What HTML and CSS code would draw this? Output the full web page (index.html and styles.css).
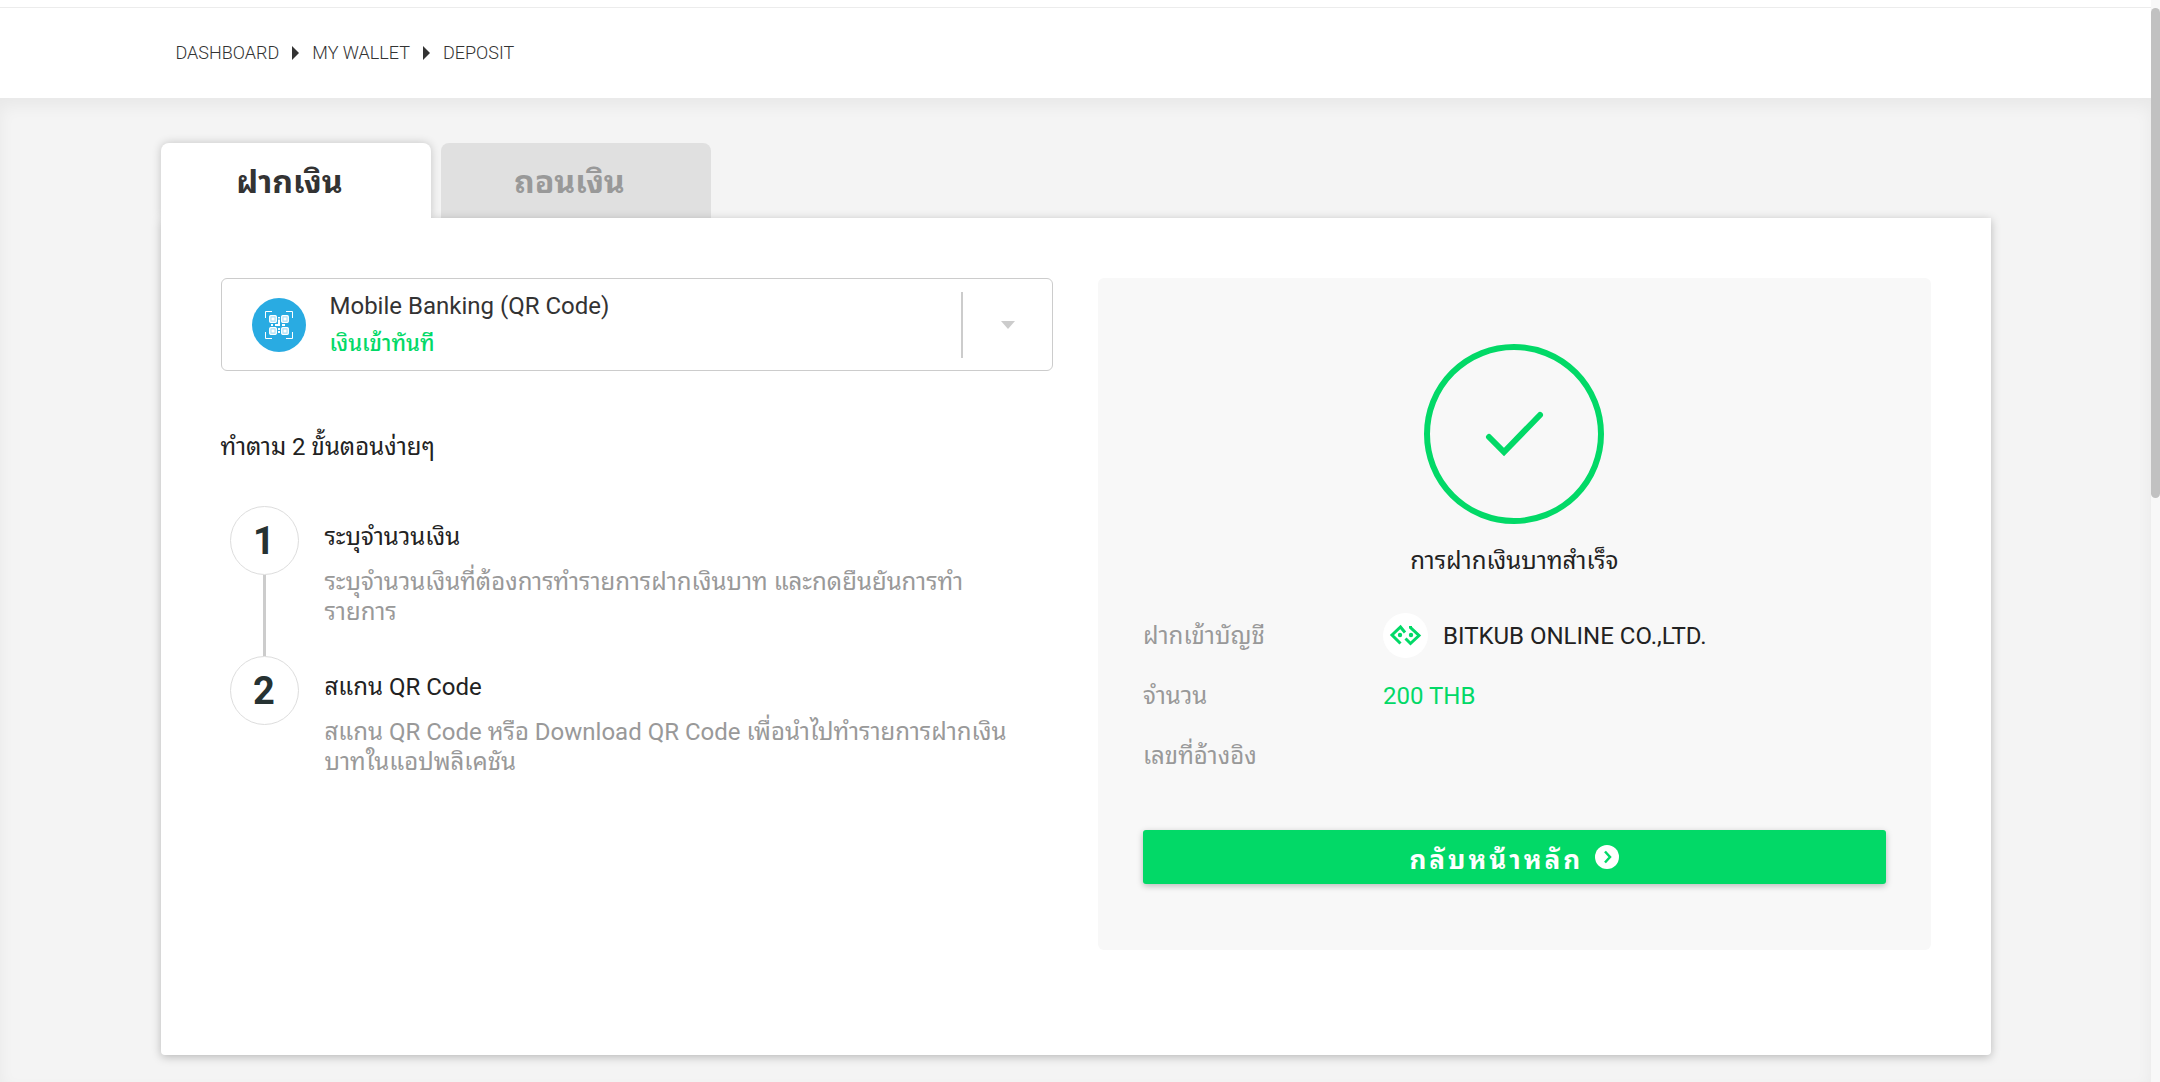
FILE: index.html
```html
<!DOCTYPE html>
<html lang="th">

<head>
    <meta charset="UTF-8">
    <meta name="viewport" content="width=device-width, initial-scale=1.0">
    <title>Deposit</title>
    <link rel="stylesheet" href="styles.css">
</head>

<body>

    <div class="scrollbar">
        <div class="scrollbar-thumb"></div>
    </div>

    <header class="topbar">
        <nav class="container breadcrumb">
            <a href="#">DASHBOARD</a>
            <span class="arrow"></span>
            <a href="#">MY WALLET</a>
            <span class="arrow"></span>
            <a href="#">DEPOSIT</a>
        </nav>
    </header>

    <main class="content">
        <div class="container">

            <div class="tabs">
                <button type="button" class="tab active">ฝากเงิน</button>
                <button type="button" class="tab">ถอนเงิน</button>
            </div>

            <div class="card">

                <!-- Method and steps -->
                <section class="column">
                    <div class="method">
                        <svg class="method-icon" viewBox="0 0 54 54">
                            <circle cx="27" cy="27" r="27" fill="#29abe2"/>
                            <g fill="none" stroke="#fff">
                                <path d="M13.5 20v-6.500h6.500M34 13.500h6.500v6.500M40.500 34v6.500h-6.500M20 40.500h-6.500v-6.500"/>
                                <g fill="#a9def4" stroke-width="1.300">
                                    <rect x="17.700" y="17.700" width="6.600" height="6.600" rx="1"/>
                                    <rect x="29.700" y="17.700" width="6.600" height="6.600" rx="1"/>
                                    <rect x="17.700" y="29.700" width="6.600" height="6.600" rx="1"/>
                                    <rect x="29.700" y="29.700" width="6.600" height="6.600" rx="1"/>
                                </g>
                            </g>
                            <path fill="#fff" d="M19.500 19.500h3v3h-3zM31.500 19.500h3v3h-3zM19.500 31.500h3v3h-3zM31.500 31.500h3v3h-3zM26 19h2v1.500h-2zM26 21.500h2v6.500h-5v-2h3zM19 26h2v2h-2zM30 26h3v2h-3zM26 30h2v2h-2zM26 33h2v2h-2z"/>
                        </svg>
                        <div class="method-text">
                            <select id="method" aria-label="Deposit method">
                                <option>Mobile Banking (QR Code)</option>
                            </select>
                            <label for="method">เงินเข้าทันที</label>
                        </div>
                        <span class="method-arrow"></span>
                    </div>

                    <h2>ทำตาม 2 ขั้นตอนง่ายๆ</h2>

                    <ol class="steps">
                        <li>
                            <span class="number">1</span>
                            <div class="step-text">
                                <h3>ระบุจำนวนเงิน</h3>
                                <p>ระบุจำนวนเงินที่ต้องการทำรายการฝากเงินบาท และกดยืนยันการทำรายการ</p>
                            </div>
                        </li>
                        <li>
                            <span class="number">2</span>
                            <div class="step-text">
                                <h3>สแกน QR Code</h3>
                                <p>สแกน QR Code หรือ Download QR Code เพื่อนำไปทำรายการฝากเงินบาทในแอปพลิเคชัน</p>
                            </div>
                        </li>
                    </ol>
                </section>

                <!-- Result -->
                <section class="column result">
                    <svg class="success" viewBox="0 0 180 180" fill="none" stroke="#02d967">
                        <circle cx="90" cy="90" r="87" stroke-width="6"/>
                        <path d="M65 93l15 15 36-37" stroke-width="6" stroke-linecap="round"/>
                    </svg>
                    <h2>การฝากเงินบาทสำเร็จ</h2>

                    <dl class="details">
                        <dt>ฝากเข้าบัญชี</dt>
                        <dd>
                            <svg class="logo" viewBox="0 0 45 45">
                                <circle cx="22.500" cy="22.500" r="22.500" fill="#fff"/>
                                <g fill="none" stroke="#02d967" stroke-width="3">
                                    <path d="M22 19.500l-4.500-5.500-8.500 8 8.500 8.500"/>
                                    <path d="M27.500 13l0 1.500 8.500 8-8.500 8-5-5"/>
                                </g>
                                <circle cx="17" cy="22" r="2.200" fill="#02d967"/>
                                <circle cx="28" cy="22" r="2.200" fill="#02d967"/>
                            </svg>
                            BITKUB ONLINE CO.,LTD.
                        </dd>
                        <dt>จำนวน</dt>
                        <dd class="amount">200 THB</dd>
                        <dt>เลขที่อ้างอิง</dt>
                        <dd></dd>
                    </dl>

                    <button type="button" class="back-btn">
                        กลับหน้าหลัก
                        <svg viewBox="0 0 24 24">
                            <circle cx="12" cy="12" r="12" fill="#fff"/>
                            <path d="M10 6.500l5 5.500-5 5.500" fill="none" stroke="#02d967" stroke-width="2.500"/>
                        </svg>
                    </button>
                </section>

            </div>
        </div>
    </main>

</body>

</html>
```
FILE: styles.css
```css
* {
    box-sizing: border-box;
}

body {
    margin: 0;
    padding-right: 9px;
    background-color: #fff;
    color: #222;
    font-family: Roboto, "Noto Sans Thai Looped", sans-serif;
    font-size: 24px;
    line-height: 30px;
}

h2,
h3,
p,
dl,
dd,
ol {
    margin: 0;
    padding: 0;
    font-size: 24px;
    font-weight: 400;
}

button,
select {
    border: none;
    font-family: inherit;
    cursor: pointer;
}

.container {
    max-width: 1830px;
    margin: 0 auto;
}

.scrollbar {
    position: fixed;
    top: 0;
    right: 0;
    bottom: 0;
    width: 9px;
    padding-top: 8px;
    background-color: #f8f8f8;
}

.scrollbar-thumb {
    height: 490px;
    border-radius: 5px;
    background-color: #c1c1c1;
}

.topbar {
    margin-top: 7px;
    border-top: 1px solid #ececec;
}

.breadcrumb {
    display: flex;
    align-items: center;
    gap: 13px;
    height: 90px;
    padding-left: 15px;
}

.breadcrumb a {
    color: #333;
    font-size: 18px;
    font-weight: 300;
    text-decoration: none;
}

.arrow {
    border-left: 7px solid #333;
    border-top: 7px solid transparent;
    border-bottom: 7px solid transparent;
}

.content {
    min-height: calc(100vh - 98px);
    padding: 45px 0 27px;
    background-color: #f4f4f4;
    box-shadow: inset 0 8px 16px rgba(0, 0, 0, 0.05);
}

.tabs {
    display: flex;
    gap: 10px;
}

.tab {
    width: 270px;
    height: 75px;
    padding: 0 12px 4px 0;
    border-radius: 8px 8px 0 0;
    background-color: #e0e0e0;
    color: #999;
    font-size: 32px;
    font-weight: 700;
}

.tab.active {
    background-color: #fff;
    color: #333;
    box-shadow: 0 0 10px rgba(0, 0, 0, 0.2);
}

.card {
    position: relative;
    display: grid;
    grid-template-columns: 1fr 1fr;
    gap: 45px;
    min-height: 837px;
    padding: 60px 60px 105px;
    border-radius: 0 0 4px 4px;
    background-color: #fff;
    box-shadow: 0 2px 10px rgba(0, 0, 0, 0.25);
}

/* covers the card's shadow under the open tab */
.card::before {
    content: "";
    position: absolute;
    top: -10px;
    left: 0;
    width: 270px;
    height: 10px;
    background-color: #fff;
}

.method {
    display: flex;
    align-items: center;
    height: 93px;
    padding-left: 30px;
    border: 1px solid #ccc;
    border-radius: 6px;
}

.method-icon {
    width: 54px;
    height: 54px;
    margin-right: 24px;
}

.method-text {
    display: flex;
    flex: 1;
    flex-direction: column;
    gap: 8px;
}

.method-text select {
    appearance: none;
    height: 30px;
    padding: 0;
    background: none;
    color: #333;
    font-size: 24px;
}

.method-text label {
    color: #02d967;
    font-size: 22px;
    font-weight: 500;
}

.method-arrow {
    display: flex;
    align-items: center;
    justify-content: center;
    width: 91px;
    height: 66px;
    border-left: 2px solid #ccc;
}

.method-arrow::after {
    content: "";
    border-top: 8px solid #ccc;
    border-left: 7px solid transparent;
    border-right: 7px solid transparent;
}

.column h2 {
    margin-top: 61px;
}

.steps {
    margin-top: 44px;
    padding-left: 9px;
    list-style: none;
}

.steps li {
    position: relative;
    display: flex;
    gap: 26px;
    min-height: 150px;
}

/* line between the circles */
.steps li:not(:last-child)::before {
    content: "";
    position: absolute;
    top: 69px;
    bottom: 0;
    left: 33px;
    width: 3px;
    background-color: #ccc;
}

.number {
    display: flex;
    flex: none;
    align-items: center;
    justify-content: center;
    width: 69px;
    height: 69px;
    border: 1px solid #ddd;
    border-radius: 50%;
    color: #263232;
    font-size: 38px;
    font-weight: 700;
}

.step-text {
    padding: 16px 30px 0 0;
}

.step-text p {
    margin-top: 15px;
    color: #999;
}

.result {
    display: flex;
    flex-direction: column;
    align-items: center;
    padding: 66px 45px;
    border-radius: 6px;
    background-color: #f8f8f8;
}

.success {
    width: 180px;
    height: 180px;
}

.result h2 {
    margin-top: 22px;
}

.details {
    display: grid;
    grid-template-columns: 240px 1fr;
    grid-auto-rows: 45px;
    align-items: center;
    gap: 15px 0;
    width: 100%;
    margin-top: 37px;
}

.details dt {
    color: #999;
}

.details dd {
    display: flex;
    align-items: center;
    gap: 15px;
}

.details .amount {
    color: #02d967;
}

.logo {
    width: 45px;
    height: 45px;
}

.back-btn {
    display: flex;
    align-items: center;
    justify-content: center;
    gap: 12px;
    width: 100%;
    height: 54px;
    margin-top: 52px;
    border-radius: 3px;
    background-color: #02d967;
    color: #fff;
    font-size: 26px;
    font-weight: 700;
    letter-spacing: 3px;
    box-shadow: 0 2px 6px rgba(0, 0, 0, 0.25);
}

.back-btn svg {
    width: 24px;
    height: 24px;
}
```
